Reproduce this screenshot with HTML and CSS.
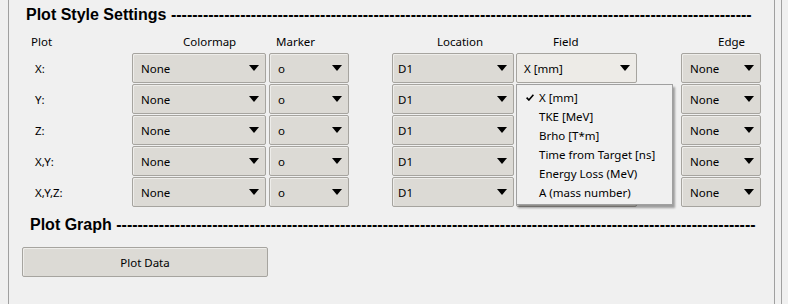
FILE: index.html
```html
<!DOCTYPE html>
<html lang="en">
	<head>
		<meta charset="UTF-8" />
		<meta name="viewport" content="width=device-width, initial-scale=1.0" />
		<title>Plot Style Settings</title>
		<link rel="stylesheet" href="styles.css">
	</head>
	<body>
		<div class="window">
			<div class="frame">
				<h2 class="section-title first">Plot Style Settings -------------------------------------------------------------------------------------------------------------</h2>

				<div class="settings">
					<div class="head head-plot">Plot</div>
					<div class="head head-colormap">Colormap</div>
					<div class="head head-marker">Marker</div>
					<div class="head head-location">Location</div>
					<div class="head head-field">Field</div>
					<div class="head head-edge">Edge</div>

					<div class="row-label">X:</div>
					<div class="combo wide"><span>None</span><i class="arrow"></i></div>
					<div class="combo small"><span>o</span><i class="arrow"></i></div>
					<div class="combo loc"><span>D1</span><i class="arrow"></i></div>
					<div class="field-cell">
						<div class="combo field active"><span>X [mm]</span><i class="arrow"></i></div>
						<ul class="dropdown">
							<li class="checked">
								<svg class="check" width="8" height="7" viewBox="0 0 8 7"><path d="M0.6 3.6 L2.9 6 L7.4 0.8" fill="none" stroke="#000" stroke-width="1.6"/></svg>
								X [mm]
							</li>
							<li>TKE [MeV]</li>
							<li>Brho [T*m]</li>
							<li>Time from Target [ns]</li>
							<li>Energy Loss (MeV)</li>
							<li>A (mass number)</li>
						</ul>
					</div>
					<div class="combo small"><span>None</span><i class="arrow"></i></div>

					<!-- field combos below sit under the open dropdown -->
					<div class="row-label">Y:</div>
					<div class="combo wide"><span>None</span><i class="arrow"></i></div>
					<div class="combo small"><span>o</span><i class="arrow"></i></div>
					<div class="combo loc"><span>D1</span><i class="arrow"></i></div>
					<div class="combo field"></div>
					<div class="combo small"><span>None</span><i class="arrow"></i></div>

					<div class="row-label">Z:</div>
					<div class="combo wide"><span>None</span><i class="arrow"></i></div>
					<div class="combo small"><span>o</span><i class="arrow"></i></div>
					<div class="combo loc"><span>D1</span><i class="arrow"></i></div>
					<div class="combo field"></div>
					<div class="combo small"><span>None</span><i class="arrow"></i></div>

					<div class="row-label">X,Y:</div>
					<div class="combo wide"><span>None</span><i class="arrow"></i></div>
					<div class="combo small"><span>o</span><i class="arrow"></i></div>
					<div class="combo loc"><span>D1</span><i class="arrow"></i></div>
					<div class="combo field"></div>
					<div class="combo small"><span>None</span><i class="arrow"></i></div>

					<div class="row-label">X,Y,Z:</div>
					<div class="combo wide"><span>None</span><i class="arrow"></i></div>
					<div class="combo small"><span>o</span><i class="arrow"></i></div>
					<div class="combo loc"><span>D1</span><i class="arrow"></i></div>
					<div class="combo field"></div>
					<div class="combo small"><span>None</span><i class="arrow"></i></div>
				</div>

				<h2 class="section-title second">Plot Graph ------------------------------------------------------------------------------------------------------------------------</h2>

				<button class="plot-btn">Plot Data</button>
			</div>
		</div>
	</body>
</html>
```

FILE: styles.css
```css
html,
body {
	margin: 0;
	padding: 0;
	background-color: #f0f0f0;
	overflow: hidden;
}
body {
	font-family: "Noto Sans", "Liberation Sans", sans-serif;
	font-size: 11.5px;
	color: #000;
}
.window {
	width: 781px;
	height: 304px;
	border-right: 1px solid #a0a0a0;
}
.frame {
	margin-left: 8px;
	width: 767px;
	height: 304px;
	border-left: 1px solid #a0a0a0;
	border-right: 1px solid #a0a0a0;
	padding-left: 13px;
	box-sizing: border-box;
}
.section-title {
	margin: 0;
	font-family: "Liberation Sans", Arial, sans-serif;
	font-size: 16px;
	font-weight: bold;
	line-height: 20px;
	white-space: nowrap;
	overflow: hidden;
}
.section-title.first {
	padding-top: 5px;
	padding-left: 4px;
}
.section-title.second {
	margin-top: 8px;
	padding-left: 8px;
}
.settings {
	display: grid;
	grid-template-columns: 110px 137px 123px 124px 165px 80px;
	grid-template-rows: 27px repeat(5, 30px);
	row-gap: 1px;
}
.head {
	align-self: end;
	line-height: 16px;
	padding-bottom: 2px;
}
.head-plot {
	padding-left: 9px;
}
.head-colormap {
	padding-left: 51px;
}
.head-marker {
	padding-left: 7px;
}
.head-location {
	padding-left: 45px;
}
.head-field {
	padding-left: 37px;
}
.head-edge {
	padding-left: 37px;
}
.row-label {
	align-self: center;
	padding-left: 13px;
	line-height: 16px;
	padding-top: 2px;
}
.combo {
	display: flex;
	align-items: center;
	height: 30px;
	box-sizing: border-box;
	background-color: #dcdad5;
	border: 1px solid #a6a49f;
	border-radius: 2px;
	box-shadow: inset 1px 1px 0 #eeedea;
	padding-left: 8px;
	padding-right: 6px;
}
.combo span {
	line-height: 16px;
	padding-top: 1px;
}
.combo.wide {
	width: 134px;
}
.combo.small {
	width: 80px;
}
.combo.loc {
	width: 122px;
	padding-left: 5px;
}
.combo.field {
	width: 121px;
	padding-left: 7px;
}
.combo.active {
	background-color: #edebe7;
}
.arrow {
	margin-left: auto;
	width: 0;
	height: 0;
	border-left: 5.5px solid transparent;
	border-right: 5.5px solid transparent;
	border-top: 6px solid #000;
	margin-top: -1px;
}
.field-cell {
	position: relative;
}
.dropdown {
	position: absolute;
	top: 31px;
	left: 0;
	z-index: 2;
	width: 157px;
	height: 121px;
	box-sizing: border-box;
	margin: 0;
	padding: 3px 0 0 0;
	list-style: none;
	background-color: #f0f0f0;
	border: 1px solid #a0a0a0;
	box-shadow: 2px 3px 2px rgba(0, 0, 0, 0.35);
}
.dropdown li {
	position: relative;
	line-height: 19px;
	padding-left: 22px;
	white-space: nowrap;
}
.check {
	position: absolute;
	left: 9px;
	top: 6px;
}
.plot-btn {
	display: block;
	margin-top: 12px;
	width: 246px;
	height: 30px;
	font-family: "Noto Sans", "Liberation Sans", sans-serif;
	font-size: 11.5px;
	color: #000;
	background-color: #dcdad5;
	border: 1px solid #a6a49f;
	border-radius: 2px;
	box-shadow: inset 1px 1px 0 #eeedea;
	padding: 0;
}
```
